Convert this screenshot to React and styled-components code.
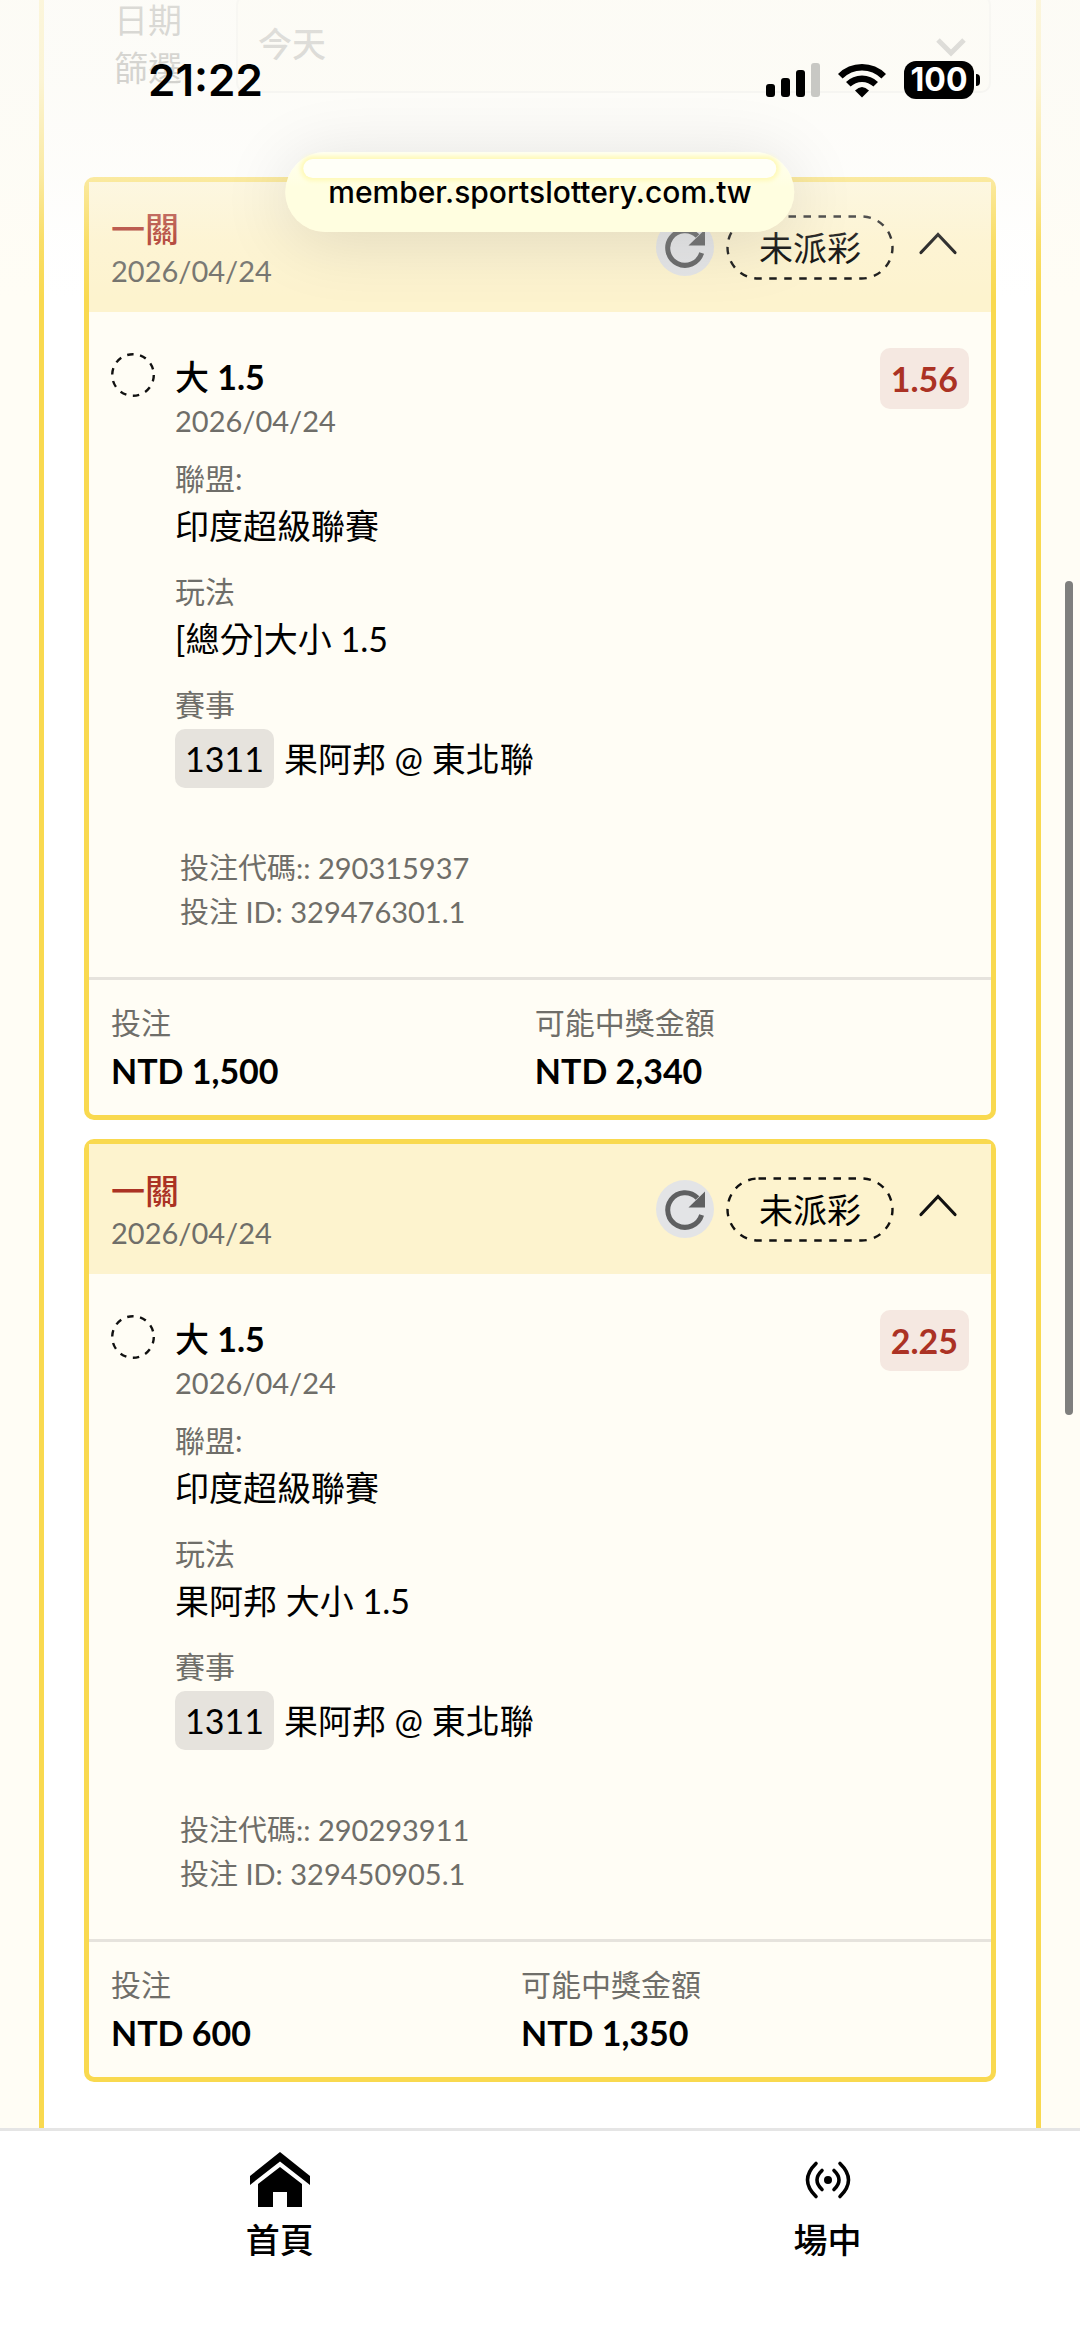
import styled, { createGlobalStyle } from "styled-components";

const GlobalStyle = createGlobalStyle`
    *{
        box-sizing: border-box;
    }
    body{
        margin: 0;
        background: #ffffff;
        color: #000000;
        font-family: Lato, "Noto Sans CJK TC", sans-serif;
        font-size: 34px;
        line-height: 48px;
    }
    h2, h3, p, dl, dt, dd{
        margin: 0;
    }
    button, select{
        font: inherit;
        color: inherit;
        border: 0;
        background: none;
        padding: 0;
    }
    svg{
        display: block;
    }
`;

const tickets = [
    {
        id: "329476301.1",
        code: "290315937",
        odds: "1.56",
        market: "[總分]大小 1.5",
        stake: "NTD 1,500",
        payout: "NTD 2,340",
    },
    {
        id: "329450905.1",
        code: "290293911",
        odds: "2.25",
        market: "果阿邦 大小 1.5",
        stake: "NTD 600",
        payout: "NTD 1,350",
    },
];

function Ticket({ ticket }) {
    return (
        <Card>
            <CardHeader>
                <Heading>
                    <CardTitle>一關</CardTitle>
                    <Muted>2026/04/24</Muted>
                </Heading>
                <Actions>
                    <RefreshButton aria-label="重新整理">
                        <svg width="58" height="58" viewBox="0 0 58 58">
                            <path d="M45.6 35A17.3 17.3 0 1 1 41.5 18" fill="none" stroke="#5f6061" strokeWidth="5" />
                            <path d="M49 11.500V27.500H32.500Z" fill="#5f6061" />
                        </svg>
                    </RefreshButton>
                    <Status>
                        <svg width="168" height="65" viewBox="0 0 168 65">
                            <rect x="1.5" y="1.5" width="165" height="62" rx="31" fill="none" stroke="#111" strokeWidth="2.4" strokeDasharray="7.5 7.5" />
                        </svg>
                        未派彩
                    </Status>
                    <ToggleButton aria-label="收合" aria-expanded="true">
                        <svg width="40" height="32" viewBox="0 0 40 32">
                            <path d="M3 21.5L20 3.5L37 21.5" fill="none" stroke="#111" strokeWidth="3.2" strokeLinecap="round" />
                        </svg>
                    </ToggleButton>
                </Actions>
            </CardHeader>
            <CardBody>
                <Pending width="44" height="46" viewBox="0 0 44 46">
                    <circle cx="22" cy="23" r="20.8" fill="none" stroke="#111" strokeWidth="2.4" strokeDasharray="6.5 6.57" />
                </Pending>
                <Details>
                    <Pick>
                        <span>大</span> 1.5
                    </Pick>
                    <Muted>2026/04/24</Muted>
                    <dl>
                        <Label>聯盟:</Label>
                        <Value>印度超級聯賽</Value>
                        <Label>玩法</Label>
                        <Value>{ticket.market}</Value>
                        <Label>賽事</Label>
                        <Match>
                            <MatchNo>1311</MatchNo>
                            果阿邦 @ 東北聯
                        </Match>
                    </dl>
                    <Codes>
                        <p>投注代碼:: {ticket.code}</p>
                        <p>投注 ID: {ticket.id}</p>
                    </Codes>
                </Details>
                <Odds>{ticket.odds}</Odds>
            </CardBody>
            <CardFooter>
                <Amount>
                    <dt>投注</dt>
                    <dd>{ticket.stake}</dd>
                </Amount>
                <Amount>
                    <dt>可能中獎金額</dt>
                    <dd>{ticket.payout}</dd>
                </Amount>
            </CardFooter>
        </Card>
    );
}

export default function App() {
    return (
        <Screen>
            <GlobalStyle />
            <Content>
                <Panel>
                    <Filter>
                        <label htmlFor="date">日期篩選</label>
                        <SelectBox>
                            <select id="date" defaultValue="today">
                                <option value="today">今天</option>
                            </select>
                            <svg width="32" height="20" viewBox="0 0 32 20">
                                <path d="M3 3L16 16L29 3" fill="none" stroke="#555" strokeWidth="5" />
                            </svg>
                        </SelectBox>
                    </Filter>
                    {tickets.map((ticket) => (
                        <Ticket key={ticket.id} ticket={ticket} />
                    ))}
                </Panel>
            </Content>
            <Nav>
                <a href="#home">
                    <svg width="60" height="56" viewBox="0 0 60 56">
                        <path d="M30 0L60 24V33L30 9.5L0 33V24Z" />
                        <path d="M30 15L52 32V55H37V40H23V55H8V32Z" />
                    </svg>
                    首頁
                </a>
                <a href="#live">
                    <svg width="60" height="56" viewBox="0 0 60 56" fill="none" stroke="#000" strokeWidth="3.6" strokeLinecap="round">
                        <circle cx="30" cy="28" r="4" fill="#000" stroke="none" />
                        <path d="M24 18.5Q14 28 24 37.5M36 18.5Q46 28 36 37.5" />
                        <path d="M18 11.5Q1 28 18 44.5M42 11.5Q59 28 42 44.5" />
                    </svg>
                    場中
                </a>
            </Nav>
            <TopFade />
            <StatusBar>
                <time>21:22</time>
                <StatusIcons>
                    <svg width="54" height="34" viewBox="0 0 54 34">
                        <rect x="0" y="21" width="9" height="13" rx="3" />
                        <rect x="15" y="15" width="9" height="19" rx="3" />
                        <rect x="30" y="7" width="9" height="27" rx="3" />
                        <rect x="45" y="0" width="9" height="34" rx="3" fill="#c8c8c4" />
                    </svg>
                    <svg width="48" height="35" viewBox="0 0 48 35" fill="none" stroke="#000" strokeWidth="6.5">
                        <path d="M2.3 13.3A30.5 30.5 0 0 1 45.7 13.3" />
                        <path d="M10.3 21.3A19.5 19.5 0 0 1 37.7 21.3" />
                        <path d="M24 34.5L17 27.5Q24 20.5 31 27.5Z" fill="#000" stroke="none" />
                    </svg>
                    <Battery>100</Battery>
                </StatusIcons>
            </StatusBar>
            <UrlPill>member.sportslottery.com.tw</UrlPill>
            <ScrollThumb />
        </Screen>
    );
}

const Screen = styled.div`
    position: relative;
    display: flex;
    flex-direction: column;
    height: 100vh;
    overflow: hidden;
`;

const Content = styled.main`
    flex: 1;
    min-height: 0;
    overflow: hidden;
    padding: 0 39px;
    background: #fffdf5;
`;

const Panel = styled.section`
    display: flex;
    flex-direction: column;
    gap: 19px;
    min-height: 100%;
    margin-top: -5px;
    padding: 0 40px 60px;
    border: solid #f9d94f;
    border-width: 0 5px;
    background: #ffffff;
`;

const Filter = styled.div`
    display: flex;
    align-items: center;
    height: 98px;
    margin-bottom: 65px;
    padding: 0 5px 0 30px;
    label{
        width: 68px;
        margin-right: 54px;
        color: #333333;
    }
`;

const SelectBox = styled.div`
    position: relative;
    flex: 1;
    height: 100%;
    border: 2px solid #e3e3e3;
    border-radius: 10px;
    background: #fffdf5;
    select{
        width: 100%;
        height: 100%;
        padding-left: 20px;
        appearance: none;
        color: #555555;
        font-weight: 500;
    }
    svg{
        position: absolute;
        right: 22px;
        top: 40px;
    }
`;

const Card = styled.article`
    border: 5px solid #f9d94f;
    border-radius: 10px;
    background: #fffdf5;
`;

const CardHeader = styled.header`
    display: flex;
    align-items: center;
    justify-content: space-between;
    height: 130px;
    padding: 0 33px 0 22px;
    background: #fdf3ce;
`;

const Heading = styled.div`
    padding-top: 4px;
`;

const CardTitle = styled.h2`
    color: #ab3224;
    font-size: 34px;
    font-weight: 500;
    line-height: 44px;
`;

const Muted = styled.p`
    color: #6f6e69;
    font-size: 29px;
    line-height: 40px;
`;

const Actions = styled.div`
    display: flex;
    align-items: center;
`;

const RefreshButton = styled.button`
    width: 58px;
    height: 58px;
    margin-right: 12px;
    border-radius: 50%;
    background: #e3e4e6;
`;

const Status = styled.span`
    position: relative;
    width: 168px;
    height: 65px;
    margin-right: 24px;
    line-height: 65px;
    text-align: center;
    svg{
        position: absolute;
        inset: 0;
    }
`;

const ToggleButton = styled.button`
    width: 40px;
    height: 40px;
    display: flex;
    align-items: center;
`;

const CardBody = styled.div`
    display: flex;
    align-items: flex-start;
    padding: 36px 22px 43px;
`;

const Pending = styled.svg`
    flex: none;
    margin: 4px 20px 0 0;
`;

const Details = styled.div`
    flex: 1;
    padding-top: 5px;
`;

const Pick = styled.h3`
    font-size: 34px;
    font-weight: 700;
    line-height: 48px;
    span{
        font-weight: 500;
    }
`;

const Label = styled.dt`
    margin-top: 17px;
    color: #6f6e69;
    font-size: 30px;
    line-height: 40px;
`;

const Value = styled.dd`
    line-height: 56px;
`;

const Match = styled.dd`
    display: flex;
    align-items: center;
    gap: 10px;
    margin-top: 5px;
`;

const MatchNo = styled.span`
    padding: 0 10px;
    border-radius: 10px;
    background: #e6e3dd;
    line-height: 59px;
`;

const Codes = styled.div`
    margin-top: 58px;
    padding-left: 5px;
    color: #6f6e69;
    font-size: 29px;
    line-height: 44px;
`;

const Odds = styled.strong`
    padding: 0 11px;
    border-radius: 10px;
    background: #f5e8e1;
    color: #ab3224;
    line-height: 61px;
`;

const CardFooter = styled.dl`
    display: flex;
    padding: 20px 20px 17px 22px;
    border-top: 3px solid #e6e3dd;
`;

const Amount = styled.div`
    flex: 1 1 auto;
    dt{
        color: #6f6e69;
        font-size: 30px;
        line-height: 44px;
    }
    dd{
        font-weight: 700;
        line-height: 54px;
    }
`;

const Nav = styled.nav`
    display: flex;
    height: 219px;
    padding: 21px 0 0 6px;
    overflow: hidden;
    border-top: 3px solid #e5e5e5;
    background: #ffffff;
    a{
        display: flex;
        flex: 0 0 51%;
        flex-direction: column;
        align-items: center;
        gap: 8px;
        color: #000000;
        font-weight: 500;
        text-decoration: none;
    }
`;

const TopFade = styled.div`
    position: absolute;
    inset: 0 0 auto;
    height: 300px;
    pointer-events: none;
    background: linear-gradient(rgba(252, 251, 246, 0.84), rgba(252, 251, 246, 0.8) 80px, rgba(252, 251, 246, 0.5) 175px, rgba(252, 251, 246, 0.15) 240px, rgba(252, 251, 246, 0));
`;

const StatusBar = styled.header`
    position: absolute;
    inset: 0 0 auto;
    display: flex;
    align-items: center;
    justify-content: space-between;
    height: 160px;
    padding: 0 99px 0 148px;
    font-family: Inter, sans-serif;
    font-size: 44px;
    font-weight: 600;
`;

const StatusIcons = styled.div`
    display: flex;
    align-items: center;
    gap: 18px;
`;

const Battery = styled.span`
    position: relative;
    width: 70px;
    height: 38px;
    margin-right: 7px;
    border-radius: 12px;
    background: #000000;
    color: #ffffff;
    font-size: 32px;
    font-weight: 700;
    line-height: 38px;
    text-align: center;
    &::after{
        content: "";
        position: absolute;
        left: 72px;
        top: 13px;
        width: 4px;
        height: 12px;
        border-radius: 0 6px 6px 0;
        background: #000000;
    }
`;

const UrlPill = styled.div`
    position: absolute;
    top: 152px;
    left: 50%;
    transform: translateX(-50%);
    isolation: isolate;
    padding: 0 43px;
    border-radius: 40px;
    background: linear-gradient(#fffff2, #fffee0 36px, #fffee0);
    box-shadow: 0 8px 70px rgba(0, 0, 0, 0.12);
    font-family: Inter, sans-serif;
    font-size: 30px;
    font-weight: 500;
    line-height: 80px;
    &::before{
        content: "";
        position: absolute;
        z-index: -1;
        inset: 7px 18px auto;
        height: 19px;
        border-radius: 10px;
        background: #fffff8;
        box-shadow: 0 0 4px 3px #fffab8;
    }
`;

const ScrollThumb = styled.div`
    position: absolute;
    top: 581px;
    right: 7px;
    width: 8px;
    height: 834px;
    border-radius: 4px;
    background: #7f7f7d;
`;
